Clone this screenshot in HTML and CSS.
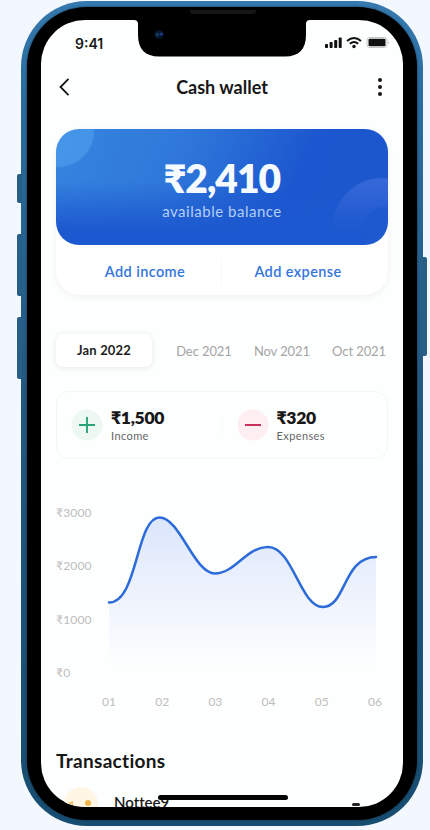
FILE: index.html
```html
<!DOCTYPE html>
<html lang="en">
<head>
<meta charset="utf-8">
<title>Cash wallet</title>
<link rel="stylesheet" href="styles.css">
</head>
<body>
<div class="phone">
  <i class="side mute"></i><i class="side up"></i><i class="side down"></i><i class="side power"></i>
  <div class="bezel">
    <i class="earpiece"></i>
    <main class="screen">
      <svg class="notch" width="176" height="37" viewBox="0 0 176 37"><path d="M0 0Q4 0 4 4V15C4 29 11 36.500 25 36.500H151C165 36.500 172 29 172 15V4Q172 0 176 0Z"/><circle cx="25" cy="14.500" r="4.500" fill="#071426"/><circle cx="23.500" cy="14.500" r="2" fill="#12385c"/><circle cx="27.500" cy="14" r="1.600" fill="#1d3c8c"/></svg>
      <div class="status">
        <span class="time">9:41</span>
        <svg width="66" height="14" viewBox="0 0 66 14">
          <g fill="#111"><rect x="0" y="8" width="3" height="4" rx=".8"/><rect x="4.600" y="6" width="3" height="6" rx=".8"/><rect x="9.200" y="4" width="3" height="8" rx=".8"/><rect x="13.700" y="1.500" width="3" height="10.500" rx=".8"/><circle cx="29" cy="10.500" r="1.700"/></g>
          <path d="M22 5Q29-1 36 5M24.800 7.800Q29 4.200 33.200 7.800" fill="none" stroke="#111" stroke-width="2"/>
          <rect x="42" y="1.500" width="20" height="10" rx="2.500" fill="none" stroke="#c8c8c8"/><rect x="43.500" y="2.800" width="17" height="7.400" rx="1" fill="#111"/><path d="M63.500 5.500v2" stroke="#c8c8c8"/>
        </svg>
      </div>
      <header class="header">
        <svg width="12" height="20" viewBox="0 0 12 20"><path d="M10.500 1.800L2.500 10l8 8.200" fill="none" stroke="#161616" stroke-width="1.800"/></svg>
        <h1>Cash wallet</h1>
        <svg width="6" height="20" viewBox="0 0 6 20" fill="#161616"><circle cx="3" cy="3" r="2"/><circle cx="3" cy="10" r="2"/><circle cx="3" cy="17" r="2"/></svg>
      </header>
      <section class="wallet">
        <div class="balance"><strong>₹2,410</strong><span>available balance</span></div>
        <div class="actions"><span class="inc">Add income</span><i></i><span class="exp">Add expense</span></div>
      </section>
      <nav class="months"><span class="active">Jan 2022</span><span>Dec 2021</span><span>Nov 2021</span><span>Oct 2021</span></nav>
      <section class="summary">
        <div class="stat">
          <svg width="32" height="32" viewBox="0 0 32 32"><circle cx="16" cy="16" r="15.500" fill="#edf8f3"/><path d="M8 16h16M16 8v16" stroke="#27a579" stroke-width="1.900"/></svg>
          <div><b>₹1,500</b><small>Income</small></div>
        </div>
        <i class="split"></i>
        <div class="stat">
          <svg width="32" height="32" viewBox="0 0 32 32"><circle cx="16" cy="16" r="15.500" fill="#fdeff1"/><path d="M8 16h16" stroke="#c32851" stroke-width="1.900"/></svg>
          <div><b>₹320</b><small>Expenses</small></div>
        </div>
      </section>
      <section class="chart">
        <div class="yaxis"><span>₹3000</span><span>₹2000</span><span>₹1000</span><span>₹0</span></div>
        <div class="plot">
          <svg width="272" height="170" viewBox="0 0 272 170">
            <defs><linearGradient id="fill" x1="0" y1="0" x2="0" y2="1"><stop offset="0" stop-color="#dbe6fc"/><stop offset=".4" stop-color="#eaf0fd"/><stop offset="1" stop-color="#fdfefe"/></linearGradient></defs>
            <path fill="url(#fill)" d="M3 97.500C32 97.500 30 12.500 53.500 12.500C74 12.500 88 68.500 109 68.500C129 68.500 140 42 162 42C187 42 194 102 217 102C240 102 237 52 270 52V162H3Z"/>
            <path fill="none" stroke="#2c6bd8" stroke-width="2.500" stroke-linecap="round" d="M3 97.500C32 97.500 30 12.500 53.500 12.500C74 12.500 88 68.500 109 68.500C129 68.500 140 42 162 42C187 42 194 102 217 102C240 102 237 52 270 52"/>
          </svg>
          <div class="xaxis"><span>01</span><span>02</span><span>03</span><span>04</span><span>05</span><span>06</span></div>
        </div>
      </section>
      <h2>Transactions</h2>
      <div class="transaction">
        <svg width="38" height="34" viewBox="0 0 38 34"><circle cx="19" cy="17" r="17" fill="#fff6e5"/><circle cx="26" cy="16" r="3" fill="#f2b64c"/><path d="M6 16l5-2v4z" fill="#f4c36c"/></svg>
        <span>Nottee9</span>
        <i></i>
      </div>
      <i class="home"></i>
    </main>
  </div>
</div>
</body>
</html>
```
FILE: styles.css
```css
* { box-sizing: border-box; }
body { margin: 0; width: 430px; height: 830px; overflow: hidden; background: #f3f7fe; font-family: Lato, "Noto Sans", sans-serif; color: #171717; font-variant-ligatures: none; }
h1, h2 { margin: 0; font-weight: 700; }
.phone { position: relative; width: 402px; height: 825px; margin: 1px 0 0 21px; padding: 6px; border-radius: 66px; background: linear-gradient(#3579ae, #2a6c9e 12%, #22577e 50%, #174d70); }
.bezel { position: relative; height: 813px; padding: 13px 14px; background: #000; border-radius: 60px; box-shadow: 0 0 2px #123; }
.earpiece { position: absolute; left: 163px; top: 3px; width: 66px; height: 4px; border-radius: 0 0 3px 3px; background: #161616; }
.side { position: absolute; width: 5px; background: #285f86; }
.mute { left: -4px; top: 173px; height: 29px; border-radius: 2px 0 0 2px; }
.up { left: -4px; top: 233px; height: 62px; border-radius: 2px 0 0 2px; }
.down { left: -4px; top: 316px; height: 62px; border-radius: 2px 0 0 2px; }
.power { right: -4px; top: 256px; height: 99px; border-radius: 0 2px 2px 0; }
.screen { position: relative; width: 362px; height: 787px; overflow: hidden; background: #fdfefe; border-radius: 44px; padding: 0 15px; }
.notch { position: absolute; left: 93px; top: 0; }
.status { display: flex; justify-content: space-between; align-items: center; height: 46px; padding: 0 0 0 19px; }
.status svg { margin-right: -3px; }
.time { font: 600 14px Inter, sans-serif; letter-spacing: 0; }
.header { display: flex; align-items: center; justify-content: space-between; height: 42px; padding: 0 5px 0 2px; }
.header h1 { font-size: 18px; margin-right: 3px; }
.wallet { margin-top: 21px; height: 166px; width: 332px; border-radius: 24px; background: #fff; box-shadow: 0 2px 7px rgba(30, 40, 50, .06); }
.balance { display: flex; flex-direction: column; align-items: center; height: 116px; padding-top: 26px; border-radius: 23px; color: #f5faff; background: radial-gradient(circle at 2px 2px, rgba(84, 168, 240, .5) 0 35px, transparent 37px), radial-gradient(circle at 329px 101px, #1e59cf 0 22px, transparent 24px), linear-gradient(180deg, transparent 45%, #1c58cf 88%), radial-gradient(circle at 326px 98px, #3567d8 0 48px, transparent 50px), linear-gradient(115deg, #3584df 0, #2f78da 35%, #1c57cf 68%, #1b56cd); }
.balance strong { font-size: 39px; line-height: 46px; font-weight: 800; letter-spacing: -1px; }
.balance span { margin-top: 1px; font-size: 15px; line-height: 19px; color: #b4cef6; letter-spacing: .52px; }
.actions { display: flex; align-items: center; height: 50px; padding: 2px 0 0; color: #3476db; font-size: 14.500px; font-weight: 600; letter-spacing: .4px; }
.actions span { flex: 1; text-align: center; }
.actions .inc { padding-left: 13px; }
.actions .exp { padding-right: 14px; }
.actions i { width: 1px; height: 25px; background: #f5f7f9; }
.months { display: flex; align-items: center; width: 330px; height: 33px; margin-top: 39px; font-size: 13px; letter-spacing: -.1px; color: #a5a5a5; white-space: nowrap; justify-content: space-between; }
.months .active { width: 96px; margin-right: 2px; line-height: 33px; border-radius: 7px; background: #fff; text-align: center; font-weight: 700; letter-spacing: .2px; color: #1d1d1d; box-shadow: 0 1px 6px rgba(30, 40, 50, .1); }
.summary { display: flex; align-items: center; width: 332px; height: 68px; margin-top: 24px; border: 1px solid #f4f5f5; border-radius: 13px; }
.stat { display: flex; flex: 1; align-items: center; gap: 8px; padding-left: 14px; }
.stat div { display: flex; flex-direction: column; }
.stat b { font-size: 17.500px; line-height: 21px; font-weight: 800; letter-spacing: -.3px; }
.stat small { font-size: 11px; line-height: 15px; color: #666; letter-spacing: .4px; }
.split { width: 1px; height: 20px; background: #f8f9f9; }
.chart { display: flex; width: 332px; margin-top: 46px; font-size: 12px; color: #bdbdbd; }
.yaxis { display: flex; flex-direction: column; width: 50px; gap: 37.300px; line-height: 16px; letter-spacing: .2px; }
.plot { width: 272px; }
.plot svg { display: block; }
.xaxis { display: flex; justify-content: space-between; width: 280px; margin: 19px 0 0 -4px; line-height: 16px; }
h2 { margin-top: 38px; font-size: 19px; line-height: 26px; letter-spacing: .3px; }
.transaction { display: flex; align-items: center; height: 34px; margin-top: 13px; font-size: 15px; font-weight: 600; }
.transaction svg { margin-left: 6px; }
.transaction span { margin-left: 14px; line-height: 20px; margin-top: -5px; }
.transaction i { width: 8px; height: 3px; margin: 0 28px 0 auto; background: #222; border-radius: 3px; }
.home { position: absolute; left: 117px; bottom: 7px; width: 130px; height: 5px; border-radius: 3px; background: #050505; }
```
